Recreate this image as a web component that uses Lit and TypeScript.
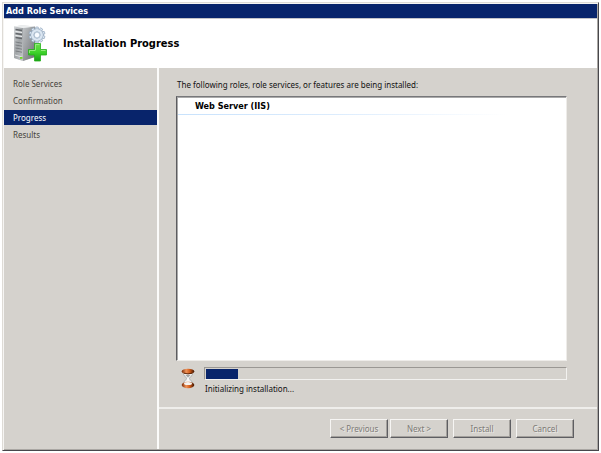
import { LitElement, html, css, svg } from "lit";
import { customElement, property } from "lit/decorators.js";

@customElement("server-icon")
class ServerIcon extends LitElement {
  static styles = css`
    :host { display: block; width: 36px; height: 38px; }
    svg { display: block; width: 36px; height: 38px; }
  `;

  render() {
    const teeth = [0, 36, 72, 108, 144, 180, 216, 252, 288, 324];
    return html`
      <svg viewBox="0 0 36 38" aria-hidden="true">
        <defs>
          <linearGradient id="front" x1="0" y1="0" x2="1" y2="1">
            <stop offset="0" stop-color="#d4d7d9" />
            <stop offset=".5" stop-color="#a0a4a7" />
            <stop offset="1" stop-color="#c6c9cb" />
          </linearGradient>
          <linearGradient id="side" x1="0" y1="0" x2="1" y2="1">
            <stop offset="0" stop-color="#c0c3c6" />
            <stop offset="1" stop-color="#6c6f72" />
          </linearGradient>
          <linearGradient id="plus" x1="0" y1="0" x2="0" y2="1">
            <stop offset="0" stop-color="#6be04a" />
            <stop offset=".5" stop-color="#3fd32b" />
            <stop offset="1" stop-color="#16a013" />
          </linearGradient>
        </defs>
        <path d="M1 1.500 L9 .2 L22 1.500 L22 32 L10 36 L1 33Z" fill="#d5d7d9" />
        <path d="M1 1.500 L10 3 V36 L1 33Z" fill="url(#front)" />
        <path d="M10 3 L22 1.500 V32 L10 36Z" fill="url(#side)" />
        <path d="M1 1.500 L9 .2 L22 1.500 L10 3Z" fill="#eceeef" />
        <path d="M2.500 4.500 L9 5.500 M2.500 8.500 L9 9.500 M2.500 12.500 L9 13.500" stroke="#62666a" stroke-width="1.400" />
        <path d="M2.500 6.500 L9 7.500 M2.500 10.500 L9 11.500" stroke="#eef0f1" stroke-width="1.200" />
        <path d="M2.500 17 L9 18.200 M2.500 20 L9 21.200 M2.500 23 L9 24.200 M2.500 26 L9 27.200" stroke="#7b7e82" />
        <path d="M2 30 L9 32" stroke="#e0e2e3" />
        <rect x="7" y="32" width="2.500" height="1.800" fill="#6edb22" />
        <g transform="translate(24 10)">
          ${teeth.map(
            (a) => svg`<path d="M-1.700 -5 L-1.200 -8 H1.200 L1.700 -5Z" transform="rotate(${a})" fill="#dce7f2" stroke="#8aa0b8" stroke-width=".6" />`
          )}
          <circle r="4.700" fill="none" stroke="#90a5bb" stroke-width="3.600" />
          <circle r="4.700" fill="none" stroke="#dbe6f1" stroke-width="2.500" />
          <circle r="2.800" fill="#f8fbff" stroke="#9bb0c6" stroke-width=".6" />
        </g>
        <path d="M21.500 18.500 H27.500 V24.500 H33.500 V30 H27.500 V36 H21.500 V30 H15.500 V24.500 H21.500Z"
          fill="url(#plus)" stroke="#27b01d" stroke-width=".8" />
        <path d="M22.500 25 V19.500 H26.500 M16.500 28 V25.500 H22.500 M28 25.500 H32.500" fill="none" stroke="#a5f08c" stroke-width=".8" />
      </svg>
    `;
  }
}

@customElement("hourglass-icon")
class HourglassIcon extends LitElement {
  static styles = css`
    :host { display: block; width: 14px; height: 21px; }
    svg { display: block; width: 14px; height: 21px; }
  `;

  render() {
    return html`
      <svg viewBox="0 0 14 21" aria-hidden="true">
        <defs>
          <linearGradient id="wood" x1="0" y1="0" x2="1" y2="0">
            <stop offset="0" stop-color="#7a2a06" />
            <stop offset=".35" stop-color="#f0945a" />
            <stop offset=".65" stop-color="#d05a18" />
            <stop offset="1" stop-color="#3c1503" />
          </linearGradient>
        </defs>
        <path d="M2 4 C2 8 5.500 9 5.500 10.500 C5.500 12 2 13 2 17 H12 C12 13 8.500 12 8.500 10.500 C8.500 9 12 8 12 4Z" fill="#eceeee" stroke="#999c9d" stroke-width=".7" />
        <path d="M4.500 7 H9.500 L7 9.500Z" fill="#9fa2a3" />
        <path d="M7 10 V14" stroke="#fff" />
        <ellipse cx="7" cy="3.500" rx="6.300" ry="2.700" fill="url(#wood)" />
        <path d="M3 5.200 Q7 6.500 11 5.200" fill="none" stroke="#401603" stroke-width=".8" />
        <ellipse cx="7" cy="17" rx="6.300" ry="3.200" fill="url(#wood)" />
        <ellipse cx="7" cy="15.500" rx="4" ry="1.600" fill="#f4f4f2" />
      </svg>
    `;
  }
}

@customElement("app-root")
class AppRoot extends LitElement {
  @property({ type: Number }) progress = 9;

  private steps = ["Role Services", "Confirmation", "Progress", "Results"];

  static styles = css`
    :host {
      display: block;
      box-sizing: border-box;
      height: 100vh;
      padding: 2px;
      background: #fff;
      color: #111;
      font: 8px/17px "Noto Sans", Tahoma, sans-serif;
    }
    * { box-sizing: border-box; }
    .window {
      display: flex;
      flex-direction: column;
      height: 100%;
      background: #d5d2cd;
      border: 1px solid;
      border-color: #dedbd6 #48474c #48474c #dedbd6;
      box-shadow: inset 1px 1px #f6f5f3, inset -1px -1px #aaa7a3;
      padding: 1px;
    }
    .title, b, h1 { font-family: "DejaVu Sans Condensed", "DejaVu Sans", Tahoma, sans-serif; }
    .title {
      flex: none;
      height: 15px;
      padding-left: 2px;
      background: #08246b;
      border-bottom: 1px solid #c4c4c8;
      color: #fff;
      font-size: 9px;
      font-weight: bold;
      line-height: 14px;
    }
    .header {
      flex: none;
      display: flex;
      align-items: center;
      gap: 14px;
      height: 49px;
      padding-left: 9px;
      background: #fff;
    }
    h1 { margin: 0; color: #000; font-size: 11px; line-height: 17px; }
    .body { flex: 1; display: flex; min-height: 0; }
    .steps {
      flex: none;
      width: 155px;
      padding-top: 8px;
      border-right: 2px solid #fbfbfa;
    }
    ul { margin: 0; padding: 0; list-style: none; }
    .step { height: 17px; padding-left: 9px; color: #45433b; line-height: 16px; }
    .step.current {
      background: #08246b;
      background-clip: padding-box;
      border-bottom: 2px solid transparent;
      color: #fff;
    }
    .main { flex: 1; display: flex; flex-direction: column; min-width: 0; }
    .content {
      flex: 1;
      display: flex;
      flex-direction: column;
      min-height: 0;
      padding: 8px 30px 0 17px;
    }
    p { margin: 0; padding-left: 1px; }
    .intro { margin-bottom: 3px; }
    .list {
      flex: 1;
      min-height: 0;
      background: #fff;
      border: 1px solid;
      border-color: #77777a #eeece9 #eeece9 #5c5c60;
      box-shadow: inset 1px 1px #aaa;
    }
    .role {
      margin: 1px 0 0 1px;
      padding-left: 17px;
      color: #000;
    }
    .role b { display: block; font-size: 9px; line-height: 16px; }
    .role::after {
      content: "";
      display: block;
      height: 1px;
      margin-left: -17px;
      background: linear-gradient(to right, #c8e2fc, #dcecfd 40%, #fff 85%);
    }
    .status { flex: none; display: flex; height: 46px; padding: 6px 0 0 5px; gap: 9px; }
    .status hourglass-icon { flex: none; margin-top: 1px; }
    .state { flex: 1; }
    .bar {
      height: 13px;
      padding: 1px;
      border: 1px solid;
      border-color: #9a9793 #f2f1ef #f2f1ef #9a9793;
    }
    .fill { height: 10px; background: #08246b; }
    .footer {
      flex: none;
      display: flex;
      justify-content: flex-end;
      gap: 5px;
      height: 42px;
      padding: 10px 23px 0 0;
      border-top: 2px solid #efeeeb;
    }
    .pair { display: flex; gap: 2px; }
    button {
      width: 58px;
      height: 19px;
      padding: 0;
      background: #d5d2cd;
      border: 1px solid;
      border-color: #f6f5f3 #5e5e62 #5e5e62 #f6f5f3;
      box-shadow: inset -1px -1px #a3a09c;
      color: #7d7b77;
      font: inherit;
      line-height: 16px;
      text-shadow: 1px 1px #eae8e5;
    }
  `;

  render() {
    return html`
      <div class="window">
        <div class="title">Add Role Services</div>
        <header class="header">
          <server-icon></server-icon>
          <h1>Installation Progress</h1>
        </header>
        <div class="body">
          <nav class="steps">
            <ul>
              ${this.steps.map(
                (s) => html`<li class="step ${s === "Progress" ? "current" : ""}">${s}</li>`
              )}
            </ul>
          </nav>
          <main class="main">
            <section class="content">
              <p class="intro">The following roles, role services, or features are being installed:</p>
              <div class="list"><div class="role"><b>Web Server (IIS)</b></div></div>
              <div class="status">
                <hourglass-icon></hourglass-icon>
                <div class="state">
                  <div class="bar" role="progressbar" aria-label="Installation" aria-valuenow=${this.progress}>
                    <div class="fill" style="width:${this.progress}%"></div>
                  </div>
                  <p>Initializing installation...</p>
                </div>
              </div>
            </section>
            <footer class="footer">
              <div class="pair">
                <button disabled>&lt; Previous</button>
                <button disabled>Next &gt;</button>
              </div>
              <button disabled>Install</button>
              <button disabled>Cancel</button>
            </footer>
          </main>
        </div>
      </div>
    `;
  }
}
